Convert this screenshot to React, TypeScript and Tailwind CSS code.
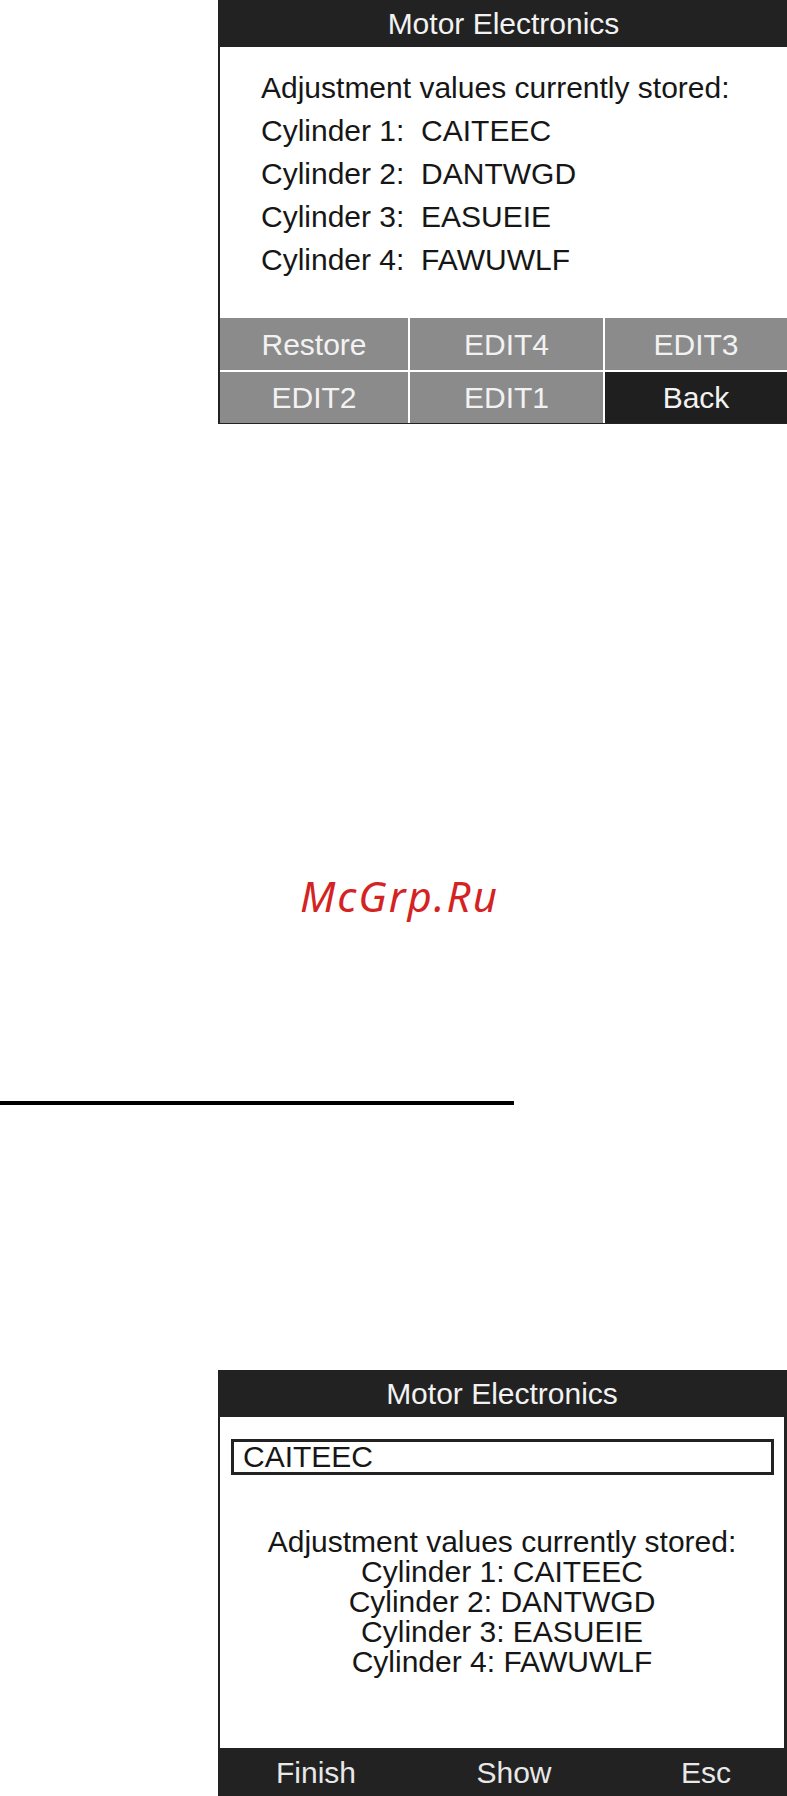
const sans = { fontFamily: '"Liberation Sans", Arial, sans-serif' };

const cylinders = [
  { label: "Cylinder 1:", value: "CAITEEC" },
  { label: "Cylinder 2:", value: "DANTWGD" },
  { label: "Cylinder 3:", value: "EASUEIE" },
  { label: "Cylinder 4:", value: "FAWUWLF" },
];

function TitleBar() {
  return (
    <div className="h-[47px] bg-[#222222] text-[#f2f2f2] text-[30px] flex items-center justify-center">
      Motor Electronics
    </div>
  );
}

function StoredValuesScreen() {
  return (
    <div className="ml-[218px] w-[569px] border-l-2 border-b border-[#222222]">
      <TitleBar />

      <div className="h-[271px] bg-white pt-[19px] pl-[41px] text-[30px] leading-[43px] text-[#161616]">
        <div>Adjustment values currently stored:</div>
        {cylinders.map(c => (
          <div key={c.label} className="whitespace-pre">
            {c.label}  {c.value}
          </div>
        ))}
      </div>

      <div className="grid grid-cols-[188px_193px_1fr] gap-x-[2px] gap-y-[2px] bg-white text-[30px] text-[#f2f2f2]">
        <div className="h-[52px] bg-[#8b8b8b] flex items-center justify-center">Restore</div>
        <div className="h-[52px] bg-[#8b8b8b] flex items-center justify-center">EDIT4</div>
        <div className="h-[52px] bg-[#8b8b8b] flex items-center justify-center">EDIT3</div>
        <div className="h-[51px] bg-[#8b8b8b] flex items-center justify-center">EDIT2</div>
        <div className="h-[51px] bg-[#8b8b8b] flex items-center justify-center">EDIT1</div>
        <div className="h-[51px] bg-[#1f1f1f] flex items-center justify-center">Back</div>
      </div>
    </div>
  );
}

function EditScreen() {
  return (
    <div className="mt-[265px] ml-[218px] w-[569px] border-l-2 border-r-[3px] border-[#222222]">
      <TitleBar />

      <div className="h-[331px] bg-white pt-[22px] text-[#161616]">
        <div className="ml-[11px] mr-[10px] h-[36px] border-[3px] border-[#222222] pl-[9px] text-[30px] leading-[30px] flex items-center">
          CAITEEC
        </div>

        <div className="mt-[52px] text-center text-[30px] leading-[30px]">
          <div>Adjustment values currently stored:</div>
          {cylinders.map(c => (
            <div key={c.label}>
              {c.label} {c.value}
            </div>
          ))}
        </div>
      </div>

      <div className="h-[48px] bg-[#222222] grid grid-cols-[192px_204px_1fr] text-[30px] text-[#e8e8e8]">
        <div className="flex items-center justify-center">Finish</div>
        <div className="flex items-center justify-center">Show</div>
        <div className="flex items-center justify-center pl-[12px]">Esc</div>
      </div>
    </div>
  );
}

export default function App() {
  return (
    <div className="w-[787px] h-[1796px] bg-white overflow-hidden" style={sans}>
      <StoredValuesScreen />

      {/* watermark */}
      <div
        className="mt-[451px] pl-[300px] text-[42px] leading-[42px] italic tracking-[2px] text-[#d42323]"
        style={{ fontFamily: '"Noto Sans", "Open Sans", sans-serif' }}
      >
        McGrp.Ru
      </div>

      <div className="mt-[184px] w-[514px] h-[4px] bg-black" />

      <EditScreen />
    </div>
  );
}
